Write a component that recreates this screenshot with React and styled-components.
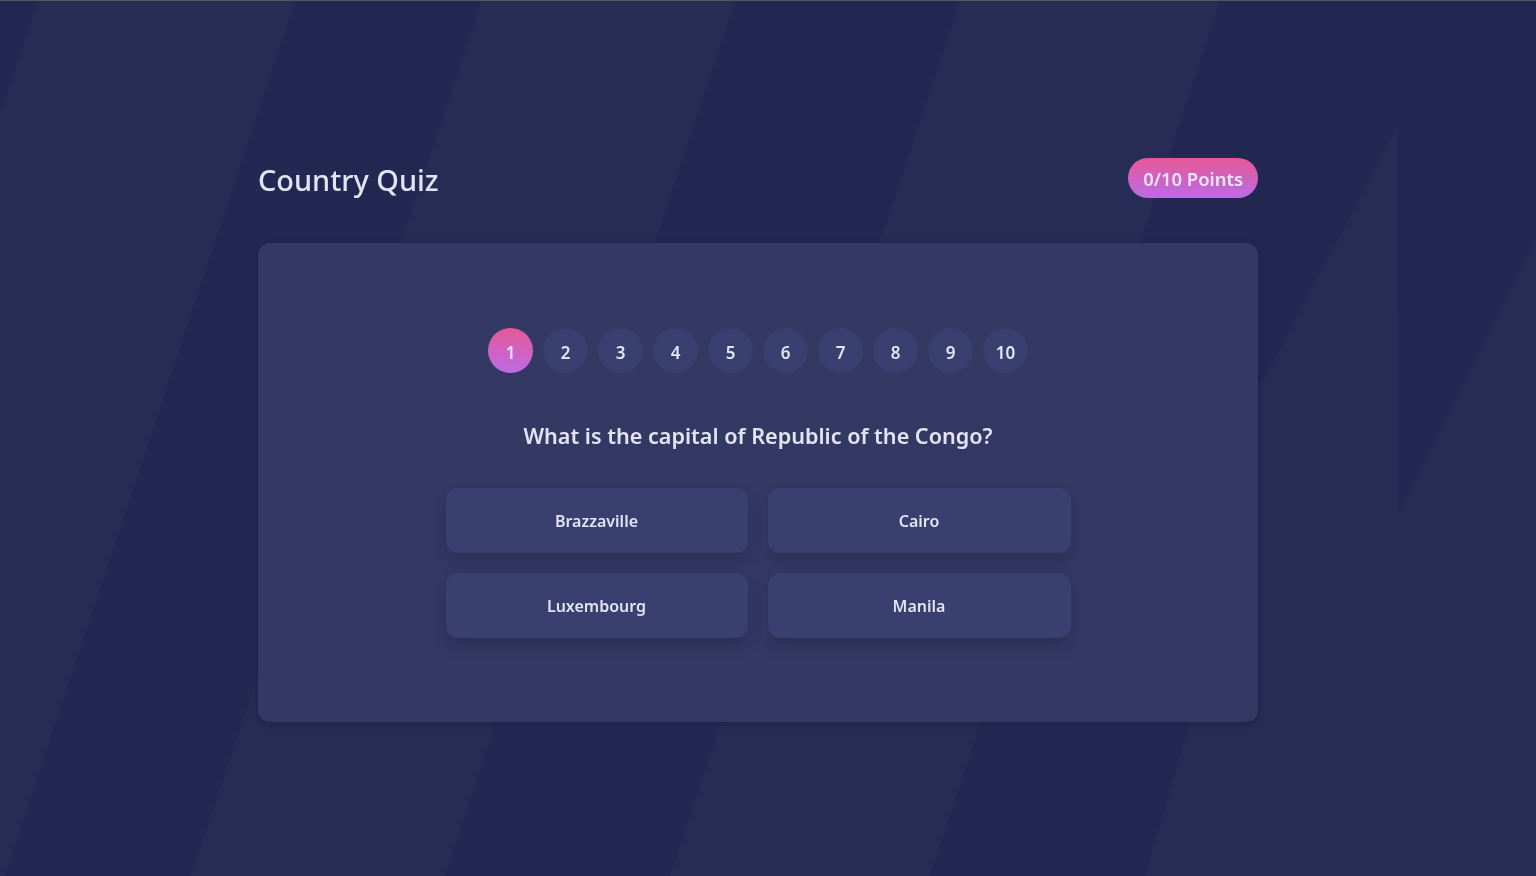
import React from "react";
import styled, { createGlobalStyle } from "styled-components";

const questions = [1, 2, 3, 4, 5, 6, 7, 8, 9, 10];
const answers = ["Brazzaville", "Cairo", "Luxembourg", "Manila"];

function App() {
  return (
    <>
      <GlobalStyle />
      <Backdrop viewBox="0 0 1536 875" preserveAspectRatio="none">
        <polygon points="38,0 295,0 5,875 -252,875" />
        <polygon points="481,0 735,0 445,875 191,875" />
        <polygon points="960,0 1220,0 930,875 670,875" />
        <polygon points="1397,127 1398,514 1536,239 1536,875 1145,875 1196,699 1258,389" />
      </Backdrop>
      <Page>
        <Main>
          <Header>
            <Title>Country Quiz</Title>
            <Points>0/10 Points</Points>
          </Header>
          <Card>
            <Steps>
              {questions.map((n) => (
                <Step key={n} $active={n === 1}>
                  {n}
                </Step>
              ))}
            </Steps>
            <Question>What is the capital of Republic of the Congo?</Question>
            <Answers>
              {answers.map((a) => (
                <Answer key={a}>{a}</Answer>
              ))}
            </Answers>
          </Card>
        </Main>
      </Page>
    </>
  );
}

export default App;

const GlobalStyle = createGlobalStyle`
  * {
    box-sizing: border-box;
  }
  body {
    margin: 0;
    background: #232852;
    color: #e2e4f3;
    font-family: "Noto Sans", "Open Sans", sans-serif;
    border-top: 1px solid #55565e;
  }
`;

const Backdrop = styled.svg`
  position: fixed;
  top: 1px;
  left: 0;
  width: 100%;
  height: calc(100% - 1px);
  z-index: 0;
  fill: #272c54;
`;

const Page = styled.div`
  position: relative;
  z-index: 1;
  min-height: calc(100vh - 1px);
  display: flex;
  justify-content: center;
  padding: 157px 20px 0 0;
`;

const Main = styled.main`
  width: 1000px;
`;

const Header = styled.header`
  display: flex;
  justify-content: space-between;
  align-items: center;
  height: 40px;
`;

const Title = styled.h1`
  margin: 0;
  padding-top: 2px;
  font-size: 28.9px;
  font-weight: 500;
  color: #e2e4f3;
`;

const gradient = "linear-gradient(180deg, #e65895 0%, #bc6be8 100%)";

const Points = styled.div`
  height: 40px;
  padding: 1px 15px 0;
  border-radius: 20px;
  background: ${gradient};
  display: flex;
  align-items: center;
  font-size: 18.4px;
  font-weight: 600;
  color: #e8e6f4;
`;

const Card = styled.section`
  margin-top: 45px;
  height: 479px;
  padding-top: 85px;
  background: #343964;
  border-radius: 12px;
  box-shadow: 0 2px 6px rgba(10, 12, 40, 0.25);
  display: flex;
  flex-direction: column;
  align-items: center;
`;

const Steps = styled.div`
  display: flex;
  gap: 10px;
`;

const Step = styled.div`
  width: 45px;
  height: 45px;
  padding-top: 3px;
  border-radius: 50%;
  background: ${(p) => (p.$active ? gradient : "#393f6e")};
  display: flex;
  align-items: center;
  justify-content: center;
  font-size: 17px;
  font-weight: 600;
  color: #e3e5f3;
`;

const Question = styled.h2`
  margin: 48px 0 0;
  height: 30px;
  line-height: 30px;
  font-size: 21.6px;
  font-weight: 600;
  color: #e2e4f3;
`;

const Answers = styled.div`
  margin-top: 37px;
  display: grid;
  grid-template-columns: 302px 303px;
  grid-auto-rows: 65px;
  gap: 20px;
`;

const Answer = styled.button`
  border: none;
  border-radius: 12px;
  background: #393f6e;
  box-shadow: 0 8px 14px rgba(20, 22, 50, 0.25);
  color: #e2e4f3;
  font-family: inherit;
  font-size: 16px;
  font-weight: 600;
  cursor: pointer;
`;
